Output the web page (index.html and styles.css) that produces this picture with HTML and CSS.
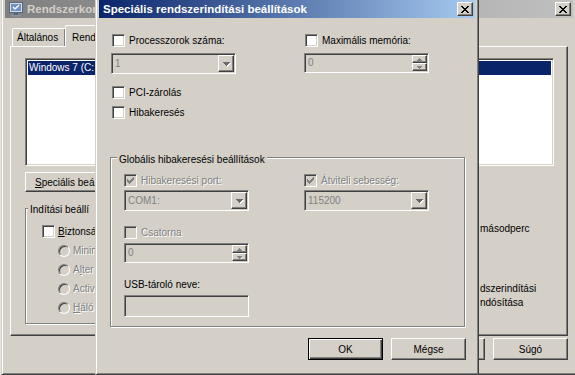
FILE: index.html
```html
<!DOCTYPE html>
<html lang="hu">
<head>
    <meta charset="UTF-8">
    <title>Speciális rendszerindítási beállítások</title>
    <link rel="stylesheet" href="styles.css">
</head>
<body>
    <div class="win back">
        <div class="titlebar inactive">
            <svg class="appicon" width="16" height="16" viewBox="0 0 16 16">
                <rect x="1.5" y="1.5" width="13" height="10" fill="#d8dee8" stroke="#56657a"/>
                <rect x="3" y="3" width="10" height="7" fill="#6f92c4"/>
                <path d="M5 6l2 2 4-4" stroke="#fff" stroke-width="1.3" fill="none"/>
                <rect x="6" y="12" width="4" height="2" fill="#56657a"/>
                <rect x="3" y="14" width="10" height="1.5" fill="#8a96a6"/>
            </svg>
            <span class="ttext">Rendszerkon</span>
            <span class="tbtn">
                <svg width="8" height="7" viewBox="0 0 8 7" shape-rendering="crispEdges"><path d="M0 0h2v1H0zM6 0h2v1H6zM1 1h2v1H1zM5 1h2v1H5zM2 2h4v1H2zM3 3h2v1H3zM2 4h4v1H2zM1 5h2v1H1zM5 5h2v1H5zM0 6h2v1H0zM6 6h2v1H6z" fill="#000"/></svg>
            </span>
        </div>
        <div class="back-body">
            <div class="tabs">
                <span class="tab first">Általános</span>
                <span class="tab sel">Rend</span>
            </div>
            <div class="panel">
                <div class="listbox">
                    <div class="item sel">Windows 7 (C:</div>
                </div>
                <button class="btn adv"><u>S</u>peciális beá</button>
                <div class="lower">
                    <div class="group boot">
                        <div class="group-title">Indítási beállí</div>
                        <label class="chk-row">
                            <span class="chk"></span><span><u>B</u>iztonsá</span>
                        </label>
                        <div class="radios">
                            <span class="radio-row"><span class="radio"></span><span class="dis-text">Minim</span></span>
                            <span class="radio-row"><span class="radio"></span><span class="dis-text">A<u>l</u>ter</span></span>
                            <span class="radio-row"><span class="radio"></span><span class="dis-text">Activ</span></span>
                            <span class="radio-row"><span class="radio"></span><span class="dis-text"><u>H</u>áló</span></span>
                        </div>
                    </div>
                    <div class="side">
                        <div class="sec">másodperc</div>
                        <div class="perm">dszerindítási<br>ndósítása</div>
                    </div>
                </div>
            </div>
            <div class="back-btns">
                <button class="btn"></button>
                <button class="btn">Súgó</button>
            </div>
        </div>
    </div>

    <div class="win dialog">
        <div class="titlebar active">
            <span class="ttext">Speciális rendszerindítási beállítások</span>
            <span class="tbtn">
                <svg width="8" height="7" viewBox="0 0 8 7" shape-rendering="crispEdges"><path d="M0 0h2v1H0zM6 0h2v1H6zM1 1h2v1H1zM5 1h2v1H5zM2 2h4v1H2zM3 3h2v1H3zM2 4h4v1H2zM1 5h2v1H1zM5 5h2v1H5zM0 6h2v1H0zM6 6h2v1H6z" fill="#000"/></svg>
            </span>
        </div>
        <div class="dlg-body">
            <div class="cols top">
                <div class="col">
                    <label class="chk-row"><span class="chk"></span>Processzorok száma:</label>
                    <div class="combo after-chk">
                        <span class="val">1</span>
                        <span class="drop"><svg width="7" height="4" viewBox="0 0 7 4" shape-rendering="crispEdges"><path d="M0 0h7v1H0zM1 1h5v1H1zM2 2h3v1H2zM3 3h1v1H3z" fill="#6a6a6a"/></svg></span>
                    </div>
                    <label class="chk-row pci"><span class="chk"></span>PCI-zárolás</label>
                    <label class="chk-row dbg"><span class="chk"></span>Hibakeresés</label>
                </div>
                <div class="col">
                    <label class="chk-row"><span class="chk"></span>Maximális memória:</label>
                    <div class="spin after-chk">
                        <span class="val">0</span>
                        <span class="spin-btns">
                            <span class="sbtn"><svg width="5" height="3" viewBox="0 0 5 3" shape-rendering="crispEdges"><path d="M2 0h1v1H2zM1 1h3v1H1zM0 2h5v1H0z" fill="#808080"/></svg></span>
                            <span class="sbtn"><svg width="5" height="3" viewBox="0 0 5 3" shape-rendering="crispEdges"><path d="M0 0h5v1H0zM1 1h3v1H1zM2 2h1v1H2z" fill="#808080"/></svg></span>
                        </span>
                    </div>
                </div>
            </div>

            <div class="group global">
                <div class="group-title">Globális hibakeresési beállítások</div>
                <div class="cols inner">
                    <div class="col">
                        <label class="chk-row first"><span class="chk on dis"><svg width="7" height="7" viewBox="0 0 7 7" shape-rendering="crispEdges"><path d="M6 0h1v1H6zM5 1h2v1H5zM0 2h1v1H0zM4 2h3v1H4zM0 3h2v1H0zM3 3h3v1H3zM0 4h5v1H0zM1 5h3v1H1zM2 6h1v1H2z" fill="#808080"/></svg></span><span class="dis-text">Hibakeresési port:</span></label>
                        <div class="combo under">
                            <span class="val">COM1:</span>
                            <span class="drop"><svg width="7" height="4" viewBox="0 0 7 4" shape-rendering="crispEdges"><path d="M0 0h7v1H0zM1 1h5v1H1zM2 2h3v1H2zM3 3h1v1H3z" fill="#6a6a6a"/></svg></span>
                        </div>
                        <label class="chk-row chan"><span class="chk dis"></span><span class="dis-text">Csatorna</span></label>
                        <div class="spin under">
                            <span class="val">0</span>
                            <span class="spin-btns">
                                <span class="sbtn"><svg width="5" height="3" viewBox="0 0 5 3" shape-rendering="crispEdges"><path d="M2 0h1v1H2zM1 1h3v1H1zM0 2h5v1H0z" fill="#808080"/></svg></span>
                                <span class="sbtn"><svg width="5" height="3" viewBox="0 0 5 3" shape-rendering="crispEdges"><path d="M0 0h5v1H0zM1 1h3v1H1zM2 2h1v1H2z" fill="#808080"/></svg></span>
                            </span>
                        </div>
                        <div class="usb-label">USB-tároló neve:</div>
                        <div class="field"></div>
                    </div>
                    <div class="col">
                        <label class="chk-row first"><span class="chk on dis"><svg width="7" height="7" viewBox="0 0 7 7" shape-rendering="crispEdges"><path d="M6 0h1v1H6zM5 1h2v1H5zM0 2h1v1H0zM4 2h3v1H4zM0 3h2v1H0zM3 3h3v1H3zM0 4h5v1H0zM1 5h3v1H1zM2 6h1v1H2z" fill="#808080"/></svg></span><span class="dis-text">Átviteli sebesség:</span></label>
                        <div class="combo under">
                            <span class="val">115200</span>
                            <span class="drop"><svg width="7" height="4" viewBox="0 0 7 4" shape-rendering="crispEdges"><path d="M0 0h7v1H0zM1 1h5v1H1zM2 2h3v1H2zM3 3h1v1H3z" fill="#6a6a6a"/></svg></span>
                        </div>
                    </div>
                </div>
            </div>

            <div class="dlg-btns">
                <button class="btn default">OK</button>
                <button class="btn">Mégse</button>
            </div>
        </div>
    </div>
</body>
</html>
```

FILE: styles.css
```css
* {
    box-sizing: border-box;
}
body {
    margin: 0;
    width: 575px;
    height: 375px;
    overflow: hidden;
    position: relative;
    background: #e4e4e4;
    font-family: "Liberation Sans", Arial, sans-serif;
    font-size: 10px;
    color: #000;
}
u {
    text-decoration: underline;
    text-underline-offset: 1px;
}

/* windows */
.win {
    position: absolute;
    background: #d4d0c8;
    border: 1px solid;
    border-color: #d4d0c8 #404040 #404040 #d4d0c8;
    box-shadow: inset 1px 1px #fff, inset -1px -1px #808080;
    padding: 3px;
}
.back {
    z-index: 0;
    left: 1px;
    top: -4px;
    width: 576px;
    height: 379px;
}
.dialog {
    z-index: 1;
    left: 95px;
    top: -4px;
    width: 384px;
    height: 379px;
}
.titlebar {
    height: 18px;
    display: flex;
    align-items: center;
    padding-left: 4px;
}
.titlebar.active {
    background: linear-gradient(to right, #0a246a, #a6caf0);
    color: #fff;
}
.titlebar.inactive {
    background: linear-gradient(to right, #808080, #c0c0c0);
    color: #d4d0c8;
    padding-left: 3px;
}
.appicon {
    flex: none;
    margin-right: 3px;
}
.ttext {
    flex: 1;
    font-weight: bold;
    font-size: 11.5px;
    white-space: nowrap;
}
.tbtn {
    flex: none;
    width: 16px;
    height: 14px;
    margin-right: 2px;
    background: #d4d0c8;
    border: 1px solid;
    border-color: #fff #404040 #404040 #fff;
    box-shadow: inset -1px -1px #808080;
    display: flex;
    align-items: center;
    justify-content: center;
}
.tbtn svg {
    display: block;
}

/* common controls */
.btn {
    font: inherit;
    color: #000;
    width: 75px;
    height: 22px;
    padding: 0;
    background: #d4d0c8;
    border: 1px solid;
    border-color: #fff #404040 #404040 #fff;
    box-shadow: inset -1px -1px #808080;
}
.btn.default {
    border-color: #000;
    box-shadow: inset 1px 1px #fff, inset -1px -1px #404040, inset -2px -2px #808080;
}
.chk-row {
    display: flex;
    align-items: center;
    gap: 4px;
    height: 13px;
    line-height: 13px;
    white-space: nowrap;
}
.chk {
    flex: none;
    width: 13px;
    height: 13px;
    margin-left: 1px;
    border: 1px solid;
    border-color: #808080 #fff #fff #808080;
    box-shadow: inset 1px 1px #404040, inset -1px -1px #d4d0c8;
    background: #fff;
    display: flex;
    align-items: center;
    justify-content: center;
}
.chk.dis {
    background: #d4d0c8;
}
.chk svg {
    display: block;
}
.dis-text {
    color: #808080;
    text-shadow: 1px 1px 0 #fff;
}
.radio-row {
    display: flex;
    align-items: center;
    gap: 3px;
    height: 12px;
    line-height: 12px;
    white-space: nowrap;
}
.radio {
    flex: none;
    width: 12px;
    height: 12px;
    border-radius: 50%;
    border: 1px solid;
    border-color: #808080 #fff #fff #808080;
    box-shadow: inset 1px 1px #404040, inset -1px -1px #d4d0c8;
    background: #d4d0c8;
}
.combo,
.spin,
.field {
    width: 125px;
    height: 21px;
    display: flex;
    align-items: stretch;
    padding: 1px;
    border: 1px solid;
    border-color: #808080 #fff #fff #808080;
    box-shadow: inset 1px 1px #404040, inset -1px -1px #d4d0c8;
    background: #d4d0c8;
}
.spin {
    height: 20px;
}
.field {
    height: 22px;
}
.val {
    flex: 1;
    padding-left: 2px;
    line-height: 17px;
    color: #808080;
}
.spin .val {
    line-height: 16px;
}
.drop {
    width: 16px;
    border: 1px solid;
    border-color: #fff #404040 #404040 #fff;
    box-shadow: inset -1px -1px #808080;
    display: flex;
    align-items: center;
    justify-content: center;
}
.drop svg {
    display: block;
    filter: drop-shadow(1px 1px 0 #fff);
}
.spin-btns {
    width: 15px;
    display: flex;
    flex-direction: column;
}
.sbtn {
    flex: 1;
    border: 1px solid;
    border-color: #fff #404040 #404040 #fff;
    box-shadow: inset -1px -1px #808080;
    display: flex;
    align-items: center;
    justify-content: center;
}
.sbtn svg {
    display: block;
}
.group {
    border: 1px solid #808080;
    box-shadow: inset 1px 1px #fff, 1px 1px #fff;
    margin-right: 1px;
}
.group-title {
    display: table;
    padding: 0 2px;
    background: #d4d0c8;
    line-height: 13px;
    white-space: nowrap;
}

/* background window */
.back-body {
    padding-left: 5px;
}
.tabs {
    display: flex;
    align-items: flex-end;
    height: 21px;
    margin-top: 7px;
    padding-left: 2px;
}
.tab {
    height: 18px;
    padding: 2px 4px 0;
    line-height: 14px;
    border: 1px solid;
    border-bottom: none;
    border-color: #fff #404040 #fff #fff;
    border-radius: 2px 2px 0 0;
    box-shadow: inset -1px 0 #808080;
    white-space: nowrap;
}
.tab.first {
    width: 54px;
}
.tab.sel {
    position: relative;
    z-index: 1;
    width: 34px;
    height: 22px;
    margin: 0 0 -1px -1px;
    padding: 5px 0 0 6px;
    background: #d4d0c8;
}
.panel {
    width: 558px;
    height: 290px;
    padding: 11px 0 0 14px;
    border: 1px solid;
    border-color: #fff #404040 #404040 #fff;
    box-shadow: inset -1px -1px #808080;
}
.listbox {
    width: 529px;
    height: 108px;
    padding: 2px;
    border: 1px solid;
    border-color: #808080 #fff #fff #808080;
    box-shadow: inset 1px 1px #404040, inset -1px -1px #d4d0c8;
    background: #fff;
    overflow: hidden;
}
.item {
    height: 14px;
    line-height: 14px;
    padding-left: 1px;
    white-space: nowrap;
}
.item.sel {
    background: #0a246a;
    color: #fff;
}
.btn.adv {
    display: block;
    width: 116px;
    height: 20px;
    margin-top: 6px;
    padding-left: 9px;
    text-align: left;
    white-space: nowrap;
}
.lower {
    display: grid;
    grid-template-columns: 454px 1fr;
    align-items: start;
    margin-top: 16px;
}
.group.boot {
    width: 260px;
    padding: 0 0 9px 16px;
}
.boot .group-title {
    margin: -6px 0 0 -14px;
    padding-right: 8px;
}
.boot .chk-row {
    margin-top: 9px;
    gap: 3px;
}
.boot .chk {
    margin-left: 0;
}
.radios {
    display: flex;
    flex-direction: column;
    gap: 7px;
    margin-top: 7px;
    padding-left: 16px;
}
.side {
    padding-left: 1px;
    white-space: nowrap;
}
.sec {
    margin-top: 15px;
    line-height: 12px;
}
.perm {
    margin-top: 47px;
    line-height: 14px;
}
.back-btns {
    width: 558px;
    display: flex;
    justify-content: flex-end;
    gap: 8px;
    margin-top: 2px;
}

/* dialog */
.dlg-body {
    padding: 16px 9px 0 11px;
}
.cols {
    display: grid;
}
.cols.top {
    grid-template-columns: 193px 125px;
    margin-left: 1px;
}
.after-chk {
    margin-top: 6px;
}
.chk-row.pci {
    margin-top: 12px;
}
.chk-row.dbg {
    margin-top: 7px;
}
.group.global {
    margin-top: 38px;
    padding: 0 0 9px 13px;
}
.global .group-title {
    margin: -5px 0 0 -7px;
}
.cols.inner {
    grid-template-columns: 180px 125px;
}
.chk-row.first {
    margin-top: 8px;
}
.chk-row.first .chk,
.chk-row.chan .chk {
    margin-left: 0;
}
.combo.under {
    margin-top: 3px;
}
.chk-row.chan {
    margin-top: 15px;
}
.spin.under {
    margin-top: 4px;
}
.usb-label {
    margin-top: 16px;
    line-height: 12px;
}
.field {
    margin-top: 4px;
}
.dlg-btns {
    display: flex;
    justify-content: flex-end;
    gap: 8px;
    margin-top: 11px;
}
```
